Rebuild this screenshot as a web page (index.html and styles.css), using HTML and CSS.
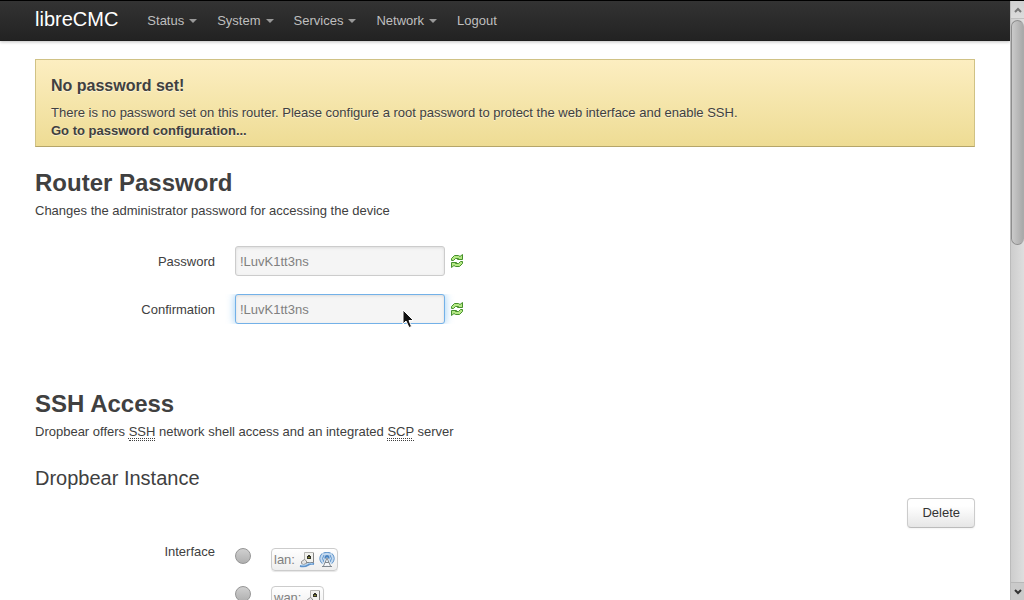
FILE: index.html
```html
<!DOCTYPE html>
<html lang="en">
<head>
<meta charset="utf-8">
<title>libreCMC - Administration</title>
<link rel="stylesheet" href="styles.css">
</head>
<body>
<svg class="defs" aria-hidden="true">
  <symbol id="reload" viewBox="0 0 12 14">
    <path d="M.5 6.500V4.500L3.500 1.500H7.500L9 2.500L11.500 .5V5.500H6.500L7.500 4.500H4.500L2.500 6.500Z" fill="#b4e884" stroke="#46902c"/>
    <path d="M11.500 7.500V9.500L8.500 12.500H4.500L3 11.500L.5 13.500V8.500H5.500L4.500 9.500H7.500L9.500 7.500Z" fill="#b4e884" stroke="#46902c"/>
  </symbol>
  <symbol id="ethernet" viewBox="0 0 16 16">
    <path d="M5.500 .5H14.500V10.500H5.500Z" fill="#f1f1ed" stroke="#b4b4b0"/>
    <path d="M14.500 1V10.500H8" fill="none" stroke="#858585"/>
    <path d="M8 4H9V3H11V4H12V7H8Z" fill="#343529"/>
    <path d="M9 5H11V6H9Z" fill="#8a8c32"/>
    <path d="M2.500 9.500L5.500 7.500L7.500 9V11.500L4.500 12.500L2.500 11.500Z" fill="#e4e4e4" stroke="#909090"/>
    <path d="M1 14Q6 15 9 13Q11 11 15 12" fill="none" stroke="#5f93cc" stroke-width="2"/>
    <path d="M2 13Q6 14 8 12Q11 10 14 12" fill="none" stroke="#a6cdef"/>
  </symbol>
  <symbol id="wireless" viewBox="0 0 16 16">
    <circle cx="8" cy="6.500" r="7" fill="#c4daf0"/>
    <g fill="none" stroke="#5f94cb">
      <path d="M3 1.500Q-1.500 6.500 3 11.500M13 1.500Q17.500 6.500 13 11.500"/>
      <path d="M5 3Q2 6.500 5 10M11 3Q14 6.500 11 10M4.500 1Q8-.5 11.500 1"/>
    </g>
    <circle cx="8" cy="5.500" r="2.500" fill="#4b84c0"/>
    <path d="M8 6L4.500 14M8 6L11.500 14M6 10.500L10.500 13.500M10 10.500L5.500 13.500" fill="none" stroke="#f6f8fa" stroke-width="2"/>
    <path d="M8 6L4.500 14M8 6L11.500 14M6 10.500H10M3 14.500H13" fill="none" stroke="#808890"/>
  </symbol>
</svg>
<div class="window">
  <div class="page">
    <header class="topbar">
      <div class="container topbar-inner">
        <a class="brand" href="#">libreCMC</a>
        <nav class="nav">
          <a class="menu" href="#">Status</a>
          <a class="menu" href="#">System</a>
          <a class="menu" href="#">Services</a>
          <a class="menu" href="#">Network</a>
          <a href="#">Logout</a>
        </nav>
      </div>
    </header>
    <main class="container">
      <section class="alert">
        <h4>No password set!</h4>
        <p>There is no password set on this router. Please configure a root password to protect the web interface and enable SSH.</p>
        <a href="#">Go to password configuration...</a>
      </section>
      <section class="section">
        <h2>Router Password</h2>
        <p>Changes the administrator password for accessing the device</p>
        <form class="fields">
          <div class="field">
            <label for="pw1">Password</label>
            <input class="text" id="pw1" type="text" value="!LuvK1tt3ns">
            <button class="reveal" type="button" aria-label="Reveal/hide password"><svg><use href="#reload"/></svg></button>
          </div>
          <div class="field">
            <label for="pw2">Confirmation</label>
            <input class="text active" id="pw2" type="text" value="!LuvK1tt3ns">
            <button class="reveal" type="button" aria-label="Reveal/hide confirmation"><svg><use href="#reload"/></svg></button>
            <svg class="pointer" viewBox="0 0 12 20" aria-hidden="true"><path d="M1 1V15L4 12L7 18.500L9.500 17.500L7 11.500H11.500Z" fill="#111" stroke="#fff"/></svg>
          </div>
        </form>
      </section>
      <section class="section">
        <h2>SSH Access</h2>
        <p>Dropbear offers <abbr title="Secure Shell">SSH</abbr> network shell access and an integrated <abbr title="Secure Copy">SCP</abbr> server</p>
        <h3>Dropbear Instance</h3>
        <div class="actions"><button class="button" type="button">Delete</button></div>
        <div class="field interface" role="radiogroup" aria-labelledby="iface">
          <span class="caption" id="iface">Interface</span>
          <div class="options">
            <div class="option">
              <input class="radio" type="radio" name="iface" id="lan">
              <label class="badge" for="lan">lan: <svg><use href="#ethernet"/></svg><svg><use href="#wireless"/></svg></label>
            </div>
            <div class="option">
              <input class="radio" type="radio" name="iface" id="wan">
              <label class="badge" for="wan">wan: <svg><use href="#ethernet"/></svg></label>
            </div>
          </div>
        </div>
      </section>
    </main>
  </div>
  <div class="scrollbar" aria-hidden="true">
    <div class="arrow"><svg viewBox="0 0 8 6"><path d="M1 5L4 2L7 5" fill="none" stroke="#777" stroke-width="2"/></svg></div>
    <div class="track"><div class="thumb"></div></div>
    <div class="arrow down"><svg viewBox="0 0 8 6"><path d="M1 1L4 4L7 1" fill="none" stroke="#333" stroke-width="2"/></svg></div>
  </div>
</div>
</body>
</html>
```
FILE: styles.css
```css
* { box-sizing: border-box; }
body {
  margin: 0;
  font: 13px/18px "Liberation Sans", Arial, sans-serif;
  color: #404040;
  background: #fff;
}
h2, h3, h4, p { margin: 0; }
a { color: inherit; text-decoration: none; }
.defs { position: absolute; width: 0; height: 0; }
.window {
  display: flex;
  height: 100vh;
  border-top: 1px solid #000;
  overflow: hidden;
}
.page { flex: 1; overflow: hidden; }
.container { max-width: 1010px; margin: 0 auto; padding: 0 35px; }
.topbar {
  background: linear-gradient(#333, #222);
  box-shadow: 0 1px 3px rgba(0, 0, 0, .25), inset 0 -1px 0 rgba(0, 0, 0, .1);
}
.topbar-inner { display: flex; align-items: center; height: 40px; }
.brand { color: #fff; font-size: 20px; padding-bottom: 4px; margin-right: 29px; }
.nav { display: flex; gap: 20px; color: #bfbfbf; }
.menu { display: flex; align-items: center; gap: 5px; }
.menu::after {
  content: "";
  border: 4px solid transparent;
  border-top-color: #999;
  border-bottom: 0;
}
.alert {
  margin-top: 18px;
  padding: 17px 15px 6px;
  border: 1px solid #d0c285;
  border-bottom-color: #b5a569;
  background: linear-gradient(#fceec1, #eedc94);
  text-shadow: 0 1px 0 rgba(255, 255, 255, .5);
}
.alert h4 { font-size: 16px; line-height: 18px; margin-bottom: 9px; }
.alert a { display: block; font-weight: bold; }
.section { margin-top: 18px; }
.section + .section { margin-top: 62px; }
h2 { font-size: 24px; line-height: 36px; margin-bottom: 1px; }
h3 { font-size: 20px; line-height: 36px; font-weight: normal; margin-top: 19px; }
abbr {
  border-bottom: 1px dotted #404040;
  padding-bottom: 1px;
  text-decoration: underline dotted 1px;
  text-underline-offset: 2px;
}
.fields { display: grid; gap: 18px; margin-top: 26px; }
.field { display: grid; grid-template-columns: 180px 210px 1fr; align-items: center; column-gap: 20px; position: relative; }
.field > label, .caption { text-align: right; }
.field > label { padding-top: 2px; }
.text {
  width: 100%;
  height: 30px;
  padding: 4px;
  border: 1px solid #ccc;
  border-radius: 3px;
  background: #f5f5f5;
  box-shadow: inset 0 1px 3px rgba(0, 0, 0, .1);
  font: inherit;
  color: #808080;
  outline: 0;
}
.text.active {
  border-color: #73b1e8;
  box-shadow: inset 0 1px 3px rgba(0, 0, 0, .1), 0 0 8px rgba(82, 168, 236, .6);
  clip-path: inset(0 -10px);
}
.reveal {
  width: 14px;
  height: 16px;
  margin-left: -14px;
  padding: 0;
  border: 0;
  background: none;
}
.reveal svg { display: block; width: 12px; height: 14px; margin: 1px 0; }
.pointer { position: absolute; left: 367px; top: 15px; width: 12px; height: 20px; }
.actions { display: flex; justify-content: flex-end; margin-top: 2px; }
.button {
  padding: 5px 14px;
  border: 1px solid #ccc;
  border-bottom-color: #bbb;
  border-radius: 4px;
  background: linear-gradient(#fff 25%, #e6e6e6);
  box-shadow: 0 1px 2px rgba(0, 0, 0, .05);
  font: inherit;
  color: #333;
}
.interface { grid-template-columns: 180px 1fr; align-items: start; margin-top: 15px; }
.options { display: grid; gap: 15px; margin-top: 5px; }
.option { display: flex; align-items: flex-start; gap: 20px; }
.radio {
  appearance: none;
  width: 16px;
  height: 16px;
  margin: 0;
  border: 1px solid #959595;
  border-radius: 50%;
  background: linear-gradient(#d0d0d0, #b0b0b0);
}
.badge {
  display: flex;
  align-items: center;
  gap: 4px;
  height: 23px;
  padding: 0 2px;
  border: 1px solid #ccc;
  border-radius: 4px;
  background: linear-gradient(#fff, #eee);
  box-shadow: 0 1px 1px rgba(0, 0, 0, .1);
  color: #808080;
}
.badge svg { width: 16px; height: 16px; }
.scrollbar {
  display: flex;
  flex-direction: column;
  width: 14px;
  border-left: 1px solid #bbb;
  background: linear-gradient(90deg, #cdcdcd, #dedede);
}
.arrow {
  display: grid;
  place-items: center;
  height: 18px;
  background: linear-gradient(#d0d0d0, #dcdcdc);
  border-bottom: 1px solid #c0c0c0;
}
.arrow svg { width: 8px; height: 6px; }
.down { border-bottom: 0; border-top: 1px solid #b8b8b8; background: #cacaca; }
.track { flex: 1; }
.thumb {
  height: 40%;
  margin-top: 1px;
  border: 1px solid #8d8d8d;
  border-right-color: #aaa;
  border-radius: 7px;
  background: linear-gradient(90deg, #cacaca, #a9a9a9);
}
```
